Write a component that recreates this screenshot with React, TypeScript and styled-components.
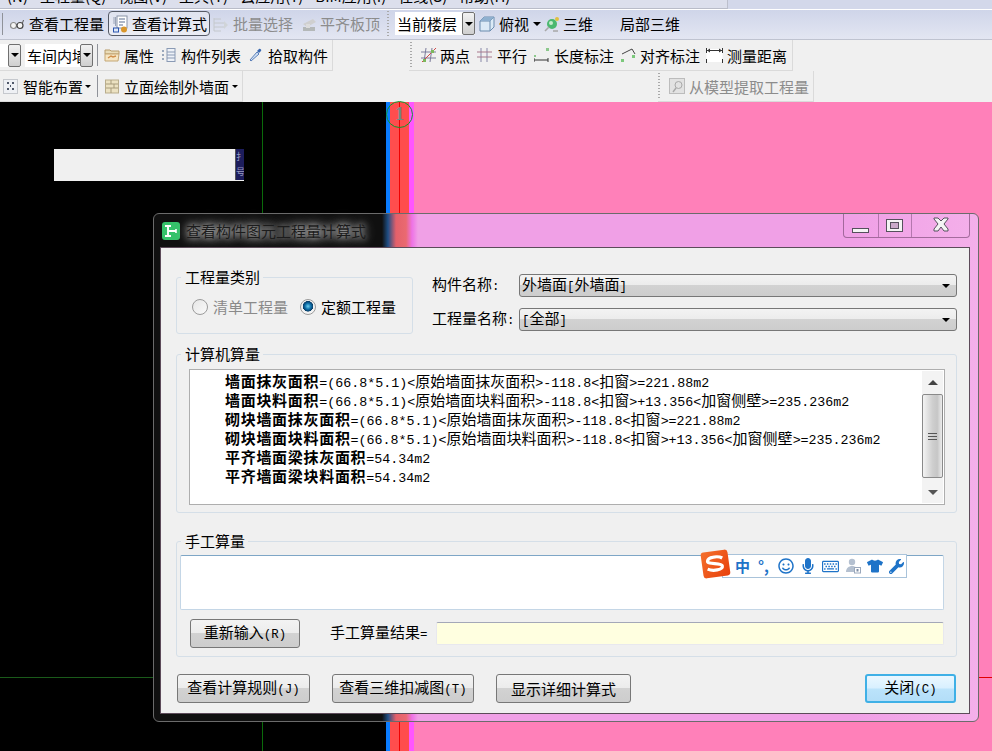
import React from "react";
import styled, { createGlobalStyle } from "styled-components";
import { FaRegSmile, FaMicrophone, FaRegKeyboard, FaTshirt, FaWrench } from "react-icons/fa";

const GlobalStyle = createGlobalStyle`
  html, body { margin: 0; padding: 0; background: #000; }
  * { box-sizing: border-box; }
`;

const CJK = `"Noto Sans CJK SC", "Liberation Sans", sans-serif`;

const Page = styled.div`
  position: relative;
  width: 992px;
  height: 751px;
  overflow: hidden;
  display: flex;
  flex-direction: column;
  font-family: ${CJK};
  font-size: 15px;
  line-height: 19px;
  color: #000;
  background: #f0f0f0;
`;

const MenuStrip = styled.div`
  height: 9px;
  flex: none;
  overflow: hidden;
  background: #d3d8ea;
`;

const MenuInner = styled.div`
  width: 728px;
  height: 9px;
  display: flex;
  gap: 12px;
  padding-left: 7px;
  background: #dcdfec;
  border-right: 1px solid #bcbfcc;
  border-bottom: 1px solid #b9bcc8;
  white-space: nowrap;
  & > span { margin-top: -14px; }
`;

const TopBar = styled.div`
  height: 31px;
  flex: none;
  display: flex;
  align-items: center;
  padding-bottom: 2px;
  border-top: 1px solid #fff;
  border-bottom: 1px solid #bfc3d0;
  background: linear-gradient(#cfd5e9, #e3e6f2);
`;

const Row = styled.div<{ $h: number }>`
  height: ${(p) => p.$h}px;
  flex: none;
  display: flex;
  align-items: stretch;
  background: #f0f0f0;
`;

const Group = styled.div<{ $w: number; $ml?: number }>`
  width: ${(p) => p.$w}px;
  margin-left: ${(p) => p.$ml ?? 0}px;
  flex: none;
  display: flex;
  align-items: center;
  background: #f0f0f0;
  border-right: 1px solid #dadada;
  border-bottom: 1px solid #dadada;
`;

const Item = styled.div<{ $ml?: number; $gap?: number; $off?: boolean }>`
  display: flex;
  align-items: center;
  flex: none;
  margin-left: ${(p) => p.$ml ?? 0}px;
  gap: ${(p) => p.$gap ?? 4}px;
  white-space: nowrap;
  color: ${(p) => (p.$off ? "#8c8c8c" : "#000")};
`;

const ActiveItem = styled(Item)`
  width: 102px;
  height: 25px;
  padding-left: 4px;
  border: 1px solid #555a66;
  border-radius: 4px;
  background: linear-gradient(#dfe3f0, #ecedf4);
`;

const Sep = styled.div<{ $ml?: number }>`
  width: 1px;
  height: 22px;
  flex: none;
  margin-left: ${(p) => p.$ml ?? 0}px;
  background: #8f9299;
`;

const Grip = styled.div<{ $ml?: number }>`
  width: 3px;
  height: 26px;
  flex: none;
  margin-left: ${(p) => p.$ml ?? 0}px;
  background-image: linear-gradient(#a9a9a9 50%, transparent 50%);
  background-size: 2px 3px;
  background-repeat: repeat-y;
`;

const Combo = styled.div<{ $w: number; $ml?: number }>`
  width: ${(p) => p.$w}px;
  height: 23px;
  flex: none;
  margin-left: ${(p) => p.$ml ?? 0}px;
  display: flex;
  justify-content: flex-end;
  background: #fff;
`;

const ComboText = styled.div`
  flex: 1;
  min-width: 0;
  padding-left: 2px;
  overflow: hidden;
  white-space: nowrap;
  line-height: 23px;
`;

const ComboArrow = styled.div`
  width: 13px;
  flex: none;
  display: flex;
  align-items: center;
  justify-content: center;
  border: 1px solid #707070;
  border-radius: 2px;
  background: linear-gradient(#f2f2f2, #cfcfcf);
`;

const Triangle = styled.i<{ $size?: number; $ml?: number; $color?: string; $up?: boolean }>`
  display: block;
  flex: none;
  margin-left: ${(p) => p.$ml ?? 0}px;
  width: 0;
  height: 0;
  border-left: ${(p) => p.$size ?? 4}px solid transparent;
  border-right: ${(p) => p.$size ?? 4}px solid transparent;
  border-top: ${(p) => p.$size ?? 4}px solid ${(p) => p.$color ?? "#000"};
  transform: ${(p) => (p.$up ? "rotate(180deg)" : "none")};
`;

const Canvas = styled.div`
  position: relative;
  flex: 1;
  display: flex;
  background: #000;
`;

const Stripe = styled.div<{ $w?: number; $color: string }>`
  flex: ${(p) => (p.$w ? `0 0 ${p.$w}px` : "1")};
  background: ${(p) => p.$color};
`;

const VLine = styled.div<{ $x: number; $color: string }>`
  position: absolute;
  top: 0;
  bottom: 0;
  left: ${(p) => p.$x}px;
  width: 1px;
  background: ${(p) => p.$color};
`;

const HLine = styled.div<{ $x: number; $w: number; $color: string }>`
  position: absolute;
  top: 575px;
  left: ${(p) => p.$x}px;
  width: ${(p) => p.$w}px;
  height: 1px;
  background: ${(p) => p.$color};
`;

const AxisMark = styled.div`
  position: absolute;
  left: 386px;
  top: -1px;
  width: 27px;
  height: 27px;
  border: 1px solid #0a9a2a;
  border-radius: 50%;
  color: #6e8a84;
  font-family: "Liberation Serif", serif;
  font-size: 18px;
  font-weight: 700;
  line-height: 25px;
  text-align: center;
`;

const PlacedBlock = styled.div`
  position: absolute;
  left: 54px;
  top: 47px;
  width: 190px;
  height: 32px;
  background: #f0f0f0;
  display: flex;
  justify-content: flex-end;
`;

const BlockTag = styled.div`
  width: 9px;
  height: 31px;
  background: #1d1d5c;
  border-left: 1px solid #555;
  color: #9a9ac0;
  font-size: 9px;
  line-height: 15px;
  overflow: hidden;
`;

const Dialog = styled.div`
  position: absolute;
  left: 153px;
  top: 111px;
  width: 826px;
  height: 509px;
  padding: 0 8px 7px 6px;
  display: flex;
  flex-direction: column;
  border: 1px solid #6b6b6b;
  border-radius: 6px;
  background: linear-gradient(
    90deg,
    #101010 0,
    #101010 228px,
    #1f4f86 234px,
    #e4606a 242px,
    #ea6a70 252px,
    #ee72e6 258px,
    #f0a0e6 264px,
    #f0a0e6 700px,
    #f4b0ea 826px
  );
`;

const TitleBar = styled.div`
  height: 33px;
  flex: none;
  display: flex;
  align-items: center;
  position: relative;
  padding-left: 2px;
`;

const TitleText = styled.div`
  margin-left: 6px;
  color: #1c1c1c;
  white-space: nowrap;
  text-shadow: 0 0 6px rgba(255, 255, 255, 0.75), 0 0 12px rgba(255, 255, 255, 0.55), 0 0 16px rgba(255, 255, 255, 0.4);
`;

const CaptionButtons = styled.div`
  position: absolute;
  top: 0;
  right: 0;
  height: 24px;
  display: flex;
  border: 1px solid rgba(130, 80, 125, 0.7);
  border-top: none;
  border-radius: 0 0 4px 4px;
`;

const CaptionButton = styled.div<{ $w: number }>`
  width: ${(p) => p.$w}px;
  display: flex;
  align-items: center;
  justify-content: center;
  & + & { border-left: 1px solid rgba(130, 80, 125, 0.55); }
`;

const Panel = styled.div`
  flex: 1;
  padding: 20px 12px 0 15px;
  display: flex;
  flex-direction: column;
  background: #f0f0f0;
  border: 1px solid #5d4b5a;
`;

const TopSection = styled.div`
  display: flex;
  height: 66px;
`;

const Box = styled.fieldset<{ $w?: number; $h: number; $mt?: number }>`
  margin: ${(p) => p.$mt ?? 0}px 0 0;
  padding: 0;
  width: ${(p) => p.$w ?? 781}px;
  height: ${(p) => p.$h}px;
  flex: none;
  position: relative;
  border: 1px solid #d5dfe8;
  border-radius: 3px;
  min-width: 0;
`;

const BoxTitle = styled.legend`
  margin-left: 4px;
  padding: 0 3px 0 4px;
  height: 18px;
  line-height: 18px;
`;

const RadioRow = styled.div`
  display: flex;
  align-items: center;
  padding: 11px 0 0 15px;
`;

const RadioOption = styled.div<{ $ml?: number; $off?: boolean }>`
  display: flex;
  align-items: center;
  gap: 5px;
  margin-left: ${(p) => p.$ml ?? 0}px;
  color: ${(p) => (p.$off ? "#8a8a8a" : "#000")};
`;

const RadioDot = styled.span<{ $on?: boolean }>`
  display: block;
  width: 16px;
  height: 16px;
  border-radius: 50%;
  border: 1px solid #9b9b9b;
  background: ${(p) =>
    p.$on
      ? "radial-gradient(circle at 50% 45%, #6fd0f0 0, #0d6ea8 3px, #083c66 5px, #f0f0f0 5.5px, #fff 100%)"
      : "linear-gradient(135deg, #e6e6e6, #fafafa)"};
`;

const FieldsColumn = styled.div`
  margin-left: 19px;
  padding-top: 6px;
  flex: 1;
  display: flex;
  flex-direction: column;
  gap: 11px;
`;

const FieldRow = styled.div`
  display: flex;
  align-items: center;
  height: 23px;
`;

const FieldLabel = styled.div`
  width: 87px;
  flex: none;
  white-space: nowrap;
`;

const Select = styled.div`
  width: 438px;
  height: 23px;
  display: flex;
  align-items: center;
  justify-content: space-between;
  padding: 0 6px 0 2px;
  border: 1px solid #777;
  border-radius: 3px;
  background: linear-gradient(#f3f3f3 0, #ececec 48%, #d2d2d2 50%, #cdcdcd 100%);
`;

const OutputBox = styled.div`
  position: absolute;
  left: 12px;
  top: 6px;
  width: 756px;
  height: 136px;
  display: flex;
  background: #fff;
  border: 1px solid #aeaeae;
  overflow: hidden;
`;

const OutputLines = styled.div`
  flex: 1;
  padding: 1px 0 0 35px;
  span.latin { font-size: 13.33px; }
`;

const OutputLine = styled.div`
  height: 19px;
  line-height: 19px;
  white-space: nowrap;
`;

const Strong = styled.b`
  font-weight: 700;
  letter-spacing: 0.7px;
`;

const Scroll = styled.div`
  width: 21px;
  flex: none;
  margin: 1px 1px 1px 0;
  display: flex;
  flex-direction: column;
  background: #f3f3f3;
`;

const ScrollEnd = styled.div`
  height: 22px;
  display: flex;
  align-items: center;
  justify-content: center;
`;

const ScrollTrack = styled.div`
  flex: 1;
`;

const ScrollThumb = styled.div`
  height: 84px;
  margin-top: 1px;
  display: flex;
  flex-direction: column;
  align-items: center;
  justify-content: center;
  gap: 2px;
  border: 1px solid #8a8a8a;
  border-radius: 2px;
  background: linear-gradient(90deg, #f4f4f4, #cfcfcf 50%, #c6c6c6 75%, #ececec);
  & > i { display: block; width: 9px; height: 1px; background: #555; }
`;

const ManualInput = styled.div`
  position: absolute;
  left: 3px;
  top: 5px;
  width: 764px;
  height: 55px;
  background: #fff;
  border: 1px solid #c4d6e6;
  border-top-color: #7ea6c6;
  border-radius: 2px;
`;

const ManualRow = styled.div`
  position: absolute;
  left: 13px;
  top: 69px;
  display: flex;
  align-items: center;
`;

const Button = styled.div<{ $w: number; $ml?: number }>`
  width: ${(p) => p.$w}px;
  height: 29px;
  flex: none;
  margin-left: ${(p) => p.$ml ?? 0}px;
  display: flex;
  align-items: center;
  justify-content: center;
  white-space: pre;
  border: 1px solid #777;
  border-radius: 3px;
  background: linear-gradient(#f3f3f3 0, #ececec 48%, #d2d2d2 50%, #cdcdcd 100%);
`;

const PrimaryButton = styled(Button)`
  border: 2px solid #3fb0e6;
  background: linear-gradient(#eaf7ff 0, #d8f0ff 48%, #bbe3fb 52%, #b3def8 100%);
`;

const ResultLabel = styled.div`
  margin-left: 30px;
  width: 106px;
  white-space: nowrap;
`;

const ResultField = styled.div`
  width: 508px;
  height: 23px;
  background: #ffffe0;
  border: 1px solid #e8e8ee;
  border-top-color: #a4a8b8;
  border-radius: 2px;
`;

const ButtonRow = styled.div`
  display: flex;
  margin: 17px 0 0 1px;
`;

const ImeBar = styled.div`
  position: absolute;
  left: 722px;
  top: 452px;
  width: 185px;
  height: 24px;
  padding-left: 12px;
  display: flex;
  align-items: center;
  background: #fff;
  border: 1px solid #a9c3da;
  color: #1e73c8;
`;

const ImeLogo = styled.div`
  position: absolute;
  left: 702px;
  top: 449px;
  width: 27px;
  height: 26px;
  display: flex;
  align-items: center;
  justify-content: center;
  transform: rotate(-8deg);
  border-radius: 3px;
  background: linear-gradient(135deg, #f4702c, #e8400c);
`;

const ImeText = styled.b<{ $w: number }>`
  width: ${(p) => p.$w}px;
  flex: none;
  font-size: 15px;
  font-weight: 700;
  line-height: 22px;
`;

const ImeIcon = styled.span<{ $w: number; $color?: string }>`
  width: ${(p) => p.$w}px;
  flex: none;
  display: flex;
  align-items: center;
  color: ${(p) => p.$color ?? "#1e73c8"};
`;

const Latin = styled.span.attrs({ className: "latin" })`
  font-family: "Liberation Mono", monospace;
  font-size: 12.4px;
`;

// ASCII runs are set in a mono face, the rest stays in the CJK face
const Mixed: React.FC<{ text: string }> = ({ text }) => (
  <span>
    {text.split(/([\x00-\x7f]+)/).map((part, i) =>
      i % 2 ? <Latin key={i}>{part}</Latin> : part
    )}
  </span>
);

const GlyphSvg = styled.svg`
  flex: none;
  display: block;
`;

const Glyph: React.FC<{ w?: number; h?: number; children: React.ReactNode }> = ({ w = 16, h = 16, children }) => (
  <GlyphSvg width={w} height={h} viewBox={`0 0 ${w} ${h}`}>
    {children}
  </GlyphSvg>
);

const GlassesIcon = () => (
  <Glyph w={14}>
    <circle cx="3.5" cy="9.5" r="3" fill="#f4f4f4" stroke="#8a8a8a" strokeWidth="1.2" />
    <circle cx="10" cy="9.5" r="3" fill="#f4f4f4" stroke="#444" strokeWidth="1.2" />
    <path d="M6.5 8.5h.5M12.5 7l1-3" stroke="#555" fill="none" />
  </Glyph>
);
const CalcIcon = () => (
  <Glyph w={15} h={18}>
    <rect x="4" y="1" width="10" height="12" fill="#fff" stroke="#8a93a8" />
    <path d="M6 4h6M6 7h6M6 10h4" stroke="#5a6c90" />
    <path d="M1 2v7M2.5 2v9" stroke="#9aa4b8" />
    <rect x="0.5" y="13" width="5" height="4" fill="#dfe8f6" stroke="#2a55b0" />
    <circle cx="11" cy="14.5" r="3" fill="#d9962c" />
  </Glyph>
);
const BatchIcon = () => (
  <Glyph w={16}>
    <path d="M1 2v13M1 3h7M1 7h10M1 11h10M1 15h7" stroke="#c4c8cc" fill="none" />
    <path d="M11 5l4 4-4 4z" fill="#d0d4d8" />
  </Glyph>
);
const AlignIcon = () => (
  <Glyph w={16}>
    <path d="M2 8l10-5 3 3-9 5z" fill="#cfcfcf" />
    <rect x="2" y="11" width="12" height="4" fill="#b4b8b8" />
    <rect x="5" y="8" width="4" height="4" fill="#dcdcdc" />
  </Glyph>
);
const CubeIcon = () => (
  <Glyph>
    <path d="M1 5l4-4h10v10l-4 4H1z" fill="#dbeaf6" stroke="#6a8cae" />
    <path d="M1 5h10v10M11 5l4-4" fill="none" stroke="#6a8cae" />
    <path d="M1 5l4-4h10l-4 4z" fill="#8fb0cf" />
  </Glyph>
);
const ThreeDIcon = () => (
  <Glyph>
    <circle cx="8" cy="8" r="5" fill="#4ab870" />
    <circle cx="7" cy="7" r="2" fill="#c4eccc" />
    <circle cx="13" cy="3" r="2" fill="#e0c040" />
    <path d="M1 15l4-4M9 15h5" stroke="#a8a8a8" strokeWidth="1.6" />
  </Glyph>
);
const FolderIcon = () => (
  <Glyph>
    <path d="M1 3h5l1 1h8v3H1z" fill="#e9dcb8" stroke="#b89c6a" />
    <path d="M1 7h14l-1 7H1z" fill="#f6e6c4" stroke="#c4a774" />
    <path d="M4 11l3-2 2 1 3-1" stroke="#d0904c" fill="none" strokeWidth="1.4" />
  </Glyph>
);
const ListIcon = () => (
  <Glyph w={15}>
    <path d="M1 3h2v2H1zM1 7h2v2H1zM1 11h2v2H1z" fill="#9aa8bc" />
    <rect x="6" y="1.5" width="8" height="13" fill="#eef2f8" stroke="#8a9ab4" />
    <path d="M6 5h8M6 8h8M6 11h8" stroke="#8a9ab4" />
  </Glyph>
);
const PipetteIcon = () => (
  <Glyph w={14}>
    <path d="M2 14l-1-1 7-8 2 2z" fill="#cfe0f4" stroke="#5a7eb8" />
    <path d="M8 4l2-2c1-1 3 1 2 2l-2 2z" fill="#3a68b0" />
  </Glyph>
);
const SmartIcon = () => (
  <Glyph w={15}>
    <rect x="0.5" y="1.5" width="14" height="14" fill="#eef0f4" stroke="#9aa0a8" strokeDasharray="1 1" />
    <path d="M4 4h2v2H4zM9 4h2v2H9zM4 10h2v2H4zM9 10h2v2H9zM7 7h1v2H7z" fill="#50586a" />
  </Glyph>
);
const BrickIcon = () => (
  <Glyph w={14}>
    <rect x="0.5" y="2" width="13" height="13" fill="#ece2c2" stroke="#b9ad8c" />
    <path d="M1 6h12M1 10h12M6 2v4M9 6v4M6 10v5" stroke="#a89c7c" />
  </Glyph>
);
const PointsIcon = () => (
  <Glyph w={16}>
    <path d="M5 1l-2 14M11 1l-2 14M0 5h15M0 11h15" stroke="#7c7c9c" fill="none" />
    <path d="M1 15L15 1" stroke="#d04848" />
    <path d="M2 12h3v3H2zM10 3h3v3h-3z" fill="#7cb85c" />
  </Glyph>
);
const ParallelIcon = () => (
  <Glyph w={15}>
    <path d="M4 1v14M10 1v14" stroke="#8888a8" />
    <path d="M0 5h15M0 10h15" stroke="#a8788c" />
  </Glyph>
);
const LengthIcon = () => (
  <Glyph w={15}>
    <path d="M0 11v4M14 11v4M0 13h14" stroke="#333" fill="none" />
    <path d="M0 8h2v2H0zM12 1h3v3h-3z" fill="#8cc88c" />
  </Glyph>
);
const AlignedIcon = () => (
  <Glyph w={16}>
    <path d="M2 7l10-5 3 5" stroke="#444" fill="none" />
    <path d="M1 12h3v3H1zM12 8h3v3h-3z" fill="#7cc87c" />
  </Glyph>
);
const MeasureIcon = () => (
  <Glyph w={17}>
    <rect x="0.5" y="2" width="16" height="13" fill="#fff" />
    <path d="M0.5 1v5M16.5 1v5M0.5 12v4M16.5 12v4M1 3.5h15" stroke="#333" fill="none" />
    <path d="M1 3.5l3-2v4zM16 3.5l-3-2v4z" fill="#333" />
  </Glyph>
);
const ExtractIcon = () => (
  <Glyph>
    <rect x="0.5" y="0.5" width="15" height="15" fill="#e2e2e2" stroke="#bcbcbc" />
    <circle cx="9.5" cy="7" r="3.5" fill="none" stroke="#a8a8a8" />
    <path d="M7 10l-3 4" stroke="#a8a8a8" strokeWidth="1.4" />
  </Glyph>
);
const AppIcon = () => (
  <Glyph w={18} h={20}>
    <rect x="0" y="1" width="18" height="18" rx="3" fill="#35c26a" />
    <path d="M6 5v10M3 5h6M3 15h6M6 10h8" stroke="#fff" strokeWidth="1.9" fill="none" />
    <path d="M14 8v4" stroke="#fff" strokeWidth="1.6" />
  </Glyph>
);
const ImeUserIcon = () => (
  <Glyph w={15}>
    <circle cx="6" cy="4" r="3.2" fill="#b4c0d0" />
    <path d="M0 14c0-4 3-6 6-6 2 0 3 .5 4 1.5V14z" fill="#b4c0d0" />
    <rect x="8.5" y="9.5" width="6" height="5.5" fill="#fff" stroke="#9aa8bc" />
    <rect x="10.5" y="11" width="2" height="2.5" fill="#7c8ca4" />
  </Glyph>
);

const capStroke = "#55505c";
const MinGlyph = () => (
  <Glyph w={18} h={24}>
    <rect x="0.5" y="14.5" width="16" height="4" fill="#f4f4f4" stroke={capStroke} />
  </Glyph>
);
const MaxGlyph = () => (
  <Glyph w={18} h={24}>
    <rect x="0.5" y="5.5" width="16" height="12" fill="#f4f4f4" stroke={capStroke} />
    <rect x="4.5" y="8.5" width="8" height="6" fill="#c9a8c8" stroke={capStroke} />
  </Glyph>
);
const CloseGlyph = () => (
  <Glyph h={24}>
    <path
      d="M1 4h4l3 3 3-3h4v1l-4 5 4 5v2h-4l-3-4-3 4H1v-2l4-5-4-5z"
      fill="#f4f4f4"
      stroke={capStroke}
    />
  </Glyph>
);

const SogouGlyph = () => (
  <Glyph w={21} h={18}>
    <path d="M18 4C14 1 4 1 3 5c-1 4 14 3 14 7 0 4-10 4-15 1" fill="none" stroke="#fff" strokeWidth="3.2" />
  </Glyph>
);

const outputLines = [
  ["墙面抹灰面积", "=(66.8*5.1)<原始墙面抹灰面积>-118.8<扣窗>=221.88m2"],
  ["墙面块料面积", "=(66.8*5.1)<原始墙面块料面积>-118.8<扣窗>+13.356<加窗侧壁>=235.236m2"],
  ["砌块墙面抹灰面积", "=(66.8*5.1)<原始墙面抹灰面积>-118.8<扣窗>=221.88m2"],
  ["砌块墙面块料面积", "=(66.8*5.1)<原始墙面块料面积>-118.8<扣窗>+13.356<加窗侧壁>=235.236m2"],
  ["平齐墙面梁抹灰面积", "=54.34m2"],
  ["平齐墙面梁块料面积", "=54.34m2"],
];

const App: React.FC = () => (
  <Page>
    <GlobalStyle />
    <MenuStrip>
      <MenuInner>
        <span>(N)</span>
        <span>工程量(Q)</span>
        <span>视图(V)</span>
        <span>工具(T)</span>
        <span>云应用(Y)</span>
        <span>BIM应用(I)</span>
        <span>在线(S)</span>
        <span>帮助(H)</span>
      </MenuInner>
    </MenuStrip>

    <TopBar>
      <Sep $ml={2} />
      <Item $ml={7} $gap={5}><GlassesIcon />查看工程量</Item>
      <ActiveItem $ml={4}><CalcIcon />查看计算式</ActiveItem>
      <Item $ml={3} $off><BatchIcon />批量选择</Item>
      <Item $ml={8} $gap={3} $off><AlignIcon />平齐板顶</Item>
      <Grip $ml={7} />
      <Combo $w={80} $ml={5}>
        <ComboText>当前楼层</ComboText>
        <ComboArrow><Triangle /></ComboArrow>
      </Combo>
      <Item $ml={4}><CubeIcon />俯视</Item>
      <Triangle $ml={4} />
      <Item $ml={3} $gap={3}><ThreeDIcon />三维</Item>
      <Item $ml={27}>局部三维</Item>
    </TopBar>

    <Row $h={31}>
      <Group $w={333}>
        <Combo $w={21}><ComboArrow><Triangle /></ComboArrow></Combo>
        <Combo $w={68} $ml={4}>
          <ComboText>车间内墙</ComboText>
          <ComboArrow><Triangle /></ComboArrow>
        </Combo>
        <Sep $ml={4} />
        <Item $ml={6}><FolderIcon />属性</Item>
        <Item $ml={7} $gap={5}><ListIcon />构件列表</Item>
        <Item $ml={8} $gap={5}><PipetteIcon />拾取构件</Item>
      </Group>
      <Group $w={384} $ml={76}>
        <Grip $ml={1} />
        <Item $ml={8} $gap={3}><PointsIcon />两点</Item>
        <Item $ml={7} $gap={5}><ParallelIcon />平行</Item>
        <Item $ml={7} $gap={5}><LengthIcon />长度标注</Item>
        <Item $ml={6} $gap={4}><AlignedIcon />对齐标注</Item>
        <Item $ml={6} $gap={4}><MeasureIcon />测量距离</Item>
      </Group>
    </Row>

    <Row $h={31}>
      <Group $w={243}>
        <Item $ml={3} $gap={5}><SmartIcon />智能布置</Item>
        <Triangle $size={3} $ml={2} />
        <Sep $ml={6} />
        <Item $ml={7} $gap={5}><BrickIcon />立面绘制外墙面</Item>
        <Triangle $size={3} $ml={3} />
      </Group>
      <Group $w={156} $ml={415}>
        <Grip />
        <Item $ml={8} $gap={4} $off><ExtractIcon />从模型提取工程量</Item>
      </Group>
    </Row>

    <Canvas>
      <Stripe $w={386} $color="#000" />
      <Stripe $w={4} $color="#0a7cff" />
      <Stripe $w={19} $color="#ff4d4d" />
      <Stripe $w={5} $color="#ff55ff" />
      <Stripe $color="#ff80b9" />
      <VLine $x={262} $color="#0a6a0a" />
      <VLine $x={399} $color="#f00000" />
      <HLine $x={0} $w={386} $color="#1a5a1a" />
      <HLine $x={979} $w={13} $color="#e00000" />
      <AxisMark>1</AxisMark>
      <PlacedBlock><BlockTag>扌<br />号</BlockTag></PlacedBlock>

      <Dialog>
        <TitleBar>
          <AppIcon />
          <TitleText>查看构件图元工程量计算式</TitleText>
          <CaptionButtons>
            <CaptionButton $w={34}><MinGlyph /></CaptionButton>
            <CaptionButton $w={33}><MaxGlyph /></CaptionButton>
            <CaptionButton $w={58}><CloseGlyph /></CaptionButton>
          </CaptionButtons>
        </TitleBar>

        <Panel>
          <TopSection>
            <Box $w={237} $h={66}>
              <BoxTitle>工程量类别</BoxTitle>
              <RadioRow>
                <RadioOption $off><RadioDot />清单工程量</RadioOption>
                <RadioOption $ml={12}><RadioDot $on />定额工程量</RadioOption>
              </RadioRow>
            </Box>
            <FieldsColumn>
              <FieldRow>
                <FieldLabel><Mixed text="构件名称:" /></FieldLabel>
                <Select><Mixed text="外墙面[外墙面]" /><Triangle /></Select>
              </FieldRow>
              <FieldRow>
                <FieldLabel><Mixed text="工程量名称:" /></FieldLabel>
                <Select><Mixed text="[全部]" /><Triangle /></Select>
              </FieldRow>
            </FieldsColumn>
          </TopSection>

          <Box $h={168} $mt={11}>
            <BoxTitle>计算机算量</BoxTitle>
            <OutputBox>
              <OutputLines>
                {outputLines.map(([name, formula]) => (
                  <OutputLine key={name}>
                    <Strong>{name}</Strong>
                    <Mixed text={formula} />
                  </OutputLine>
                ))}
              </OutputLines>
              <Scroll>
                <ScrollEnd><Triangle $size={5} $color="#444" $up /></ScrollEnd>
                <ScrollThumb><i /><i /><i /></ScrollThumb>
                <ScrollTrack />
                <ScrollEnd><Triangle $size={5} $color="#555" /></ScrollEnd>
              </Scroll>
            </OutputBox>
          </Box>

          <Box $h={125} $mt={19}>
            <BoxTitle>手工算量</BoxTitle>
            <ManualInput />
            <ManualRow>
              <Button $w={110}><Mixed text="重新输入(R)" /></Button>
              <ResultLabel><Mixed text="手工算量结果=" /></ResultLabel>
              <ResultField />
            </ManualRow>
          </Box>

          <ButtonRow>
            <Button $w={133}><Mixed text="查看计算规则(J)" /></Button>
            <Button $w={142} $ml={22}><Mixed text="查看三维扣减图(T)" /></Button>
            <Button $w={135} $ml={22}>显示详细计算式</Button>
            <PrimaryButton $w={91} $ml={234}><Mixed text="关闭(C)" /></PrimaryButton>
          </ButtonRow>
        </Panel>
      </Dialog>

      <ImeBar>
        <ImeText $w={23}>中</ImeText>
        <ImeText $w={20}>°,</ImeText>
        <ImeIcon $w={22}><FaRegSmile size={16} /></ImeIcon>
        <ImeIcon $w={22}><FaMicrophone size={16} /></ImeIcon>
        <ImeIcon $w={24}><FaRegKeyboard size={17} /></ImeIcon>
        <ImeIcon $w={21}><ImeUserIcon /></ImeIcon>
        <ImeIcon $w={22}><FaTshirt size={16} /></ImeIcon>
        <ImeIcon $w={16}><FaWrench size={15} /></ImeIcon>
      </ImeBar>
      <ImeLogo><SogouGlyph /></ImeLogo>
    </Canvas>
  </Page>
);

export default App;
